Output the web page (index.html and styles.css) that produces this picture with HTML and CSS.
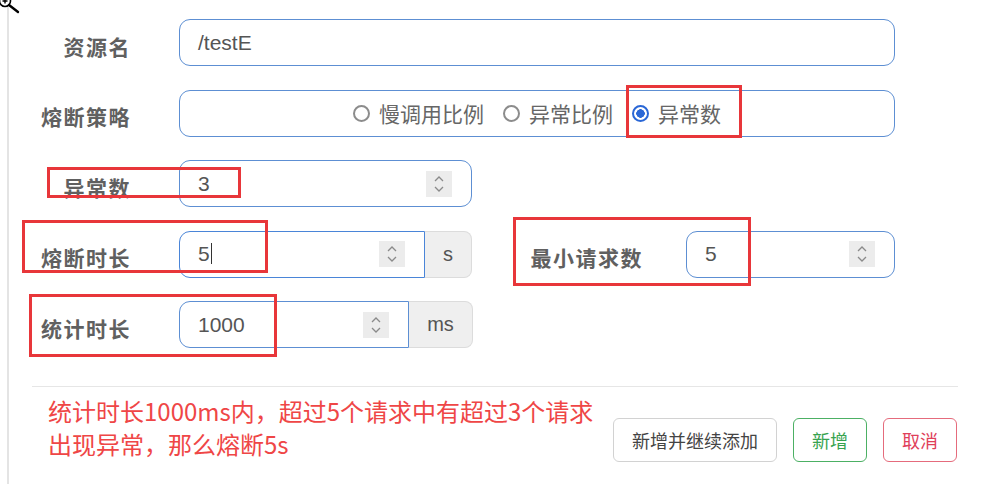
FILE: index.html
```html
<!DOCTYPE html>
<html lang="zh-CN">
<head>
    <meta charset="UTF-8">
    <title>新增降级规则</title>
    <link rel="stylesheet" href="styles.css">
</head>
<body>
    <svg class="cursor" width="24" height="18" viewBox="0 0 24 18">
        <circle cx="7" cy="3" r="5.5" fill="#fff" stroke="#000" stroke-width="1.6"/>
        <path d="M4.5 3h5M7 0.5v5" stroke="#000" stroke-width="1.4"/>
        <path d="M11 7l9 7" stroke="#000" stroke-width="2.4" stroke-linecap="round"/>
    </svg>

    <div class="panel">
        <div class="row">
            <label class="label">资源名</label>
            <div class="field wide"><span class="value">/testE</span></div>
        </div>

        <div class="row">
            <label class="label">熔断策略</label>
            <div class="field wide radios">
                <span class="radio"><i class="dot"></i>慢调用比例</span>
                <span class="radio"><i class="dot"></i>异常比例</span>
                <span class="radio checked"><i class="dot"></i>异常数</span>
            </div>
        </div>

        <div class="row">
            <label class="label">异常数</label>
            <div class="field num count">
                <span class="value">3</span>
                <span class="spin"><svg width="12" height="18" viewBox="0 0 12 18"><path d="M2 6l4-4 4 4M2 12l4 4 4-4" fill="none" stroke="#8a8a8a" stroke-width="1.3"/></svg></span>
            </div>
        </div>

        <div class="row">
            <label class="label">熔断时长</label>
            <div class="group">
                <div class="field num joined focus">
                    <span class="value">5<b class="caret"></b></span>
                    <span class="spin"><svg width="12" height="18" viewBox="0 0 12 18"><path d="M2 6l4-4 4 4M2 12l4 4 4-4" fill="none" stroke="#8a8a8a" stroke-width="1.3"/></svg></span>
                </div>
                <span class="addon">s</span>
            </div>
            <label class="label side">最小请求数</label>
            <div class="field num minreq">
                <span class="value">5</span>
                <span class="spin"><svg width="12" height="18" viewBox="0 0 12 18"><path d="M2 6l4-4 4 4M2 12l4 4 4-4" fill="none" stroke="#8a8a8a" stroke-width="1.3"/></svg></span>
            </div>
        </div>

        <div class="row">
            <label class="label">统计时长</label>
            <div class="group">
                <div class="field num joined stat">
                    <span class="value">1000</span>
                    <span class="spin"><svg width="12" height="18" viewBox="0 0 12 18"><path d="M2 6l4-4 4 4M2 12l4 4 4-4" fill="none" stroke="#8a8a8a" stroke-width="1.3"/></svg></span>
                </div>
                <span class="addon ms">ms</span>
            </div>
        </div>

        <div class="footer">
            <p class="note">统计时长1000ms内，超过5个请求中有超过3个请求<br>出现异常，那么熔断5s</p>
            <div class="buttons">
                <button class="btn">新增并继续添加</button>
                <button class="btn ok">新增</button>
                <button class="btn cancel">取消</button>
            </div>
        </div>
    </div>

    <!-- red annotation boxes drawn over the form -->
    <div class="mark m1"></div>
    <div class="mark m2"></div>
    <div class="mark m3"></div>
    <div class="mark m4"></div>
    <div class="mark m5"></div>
</body>
</html>
```

FILE: styles.css
```css
body {
    margin: 0;
    background: #fff;
    font-family: "Liberation Sans", "Noto Sans CJK SC", sans-serif;
    color: #555;
    position: relative;
    height: 484px;
    overflow: hidden;
}
.cursor {
    position: absolute;
    left: -2px;
    top: -2px;
}
.panel {
    margin-left: 7px;
    border-left: 2px solid #e4e4e4;
    height: 484px;
    padding-top: 19px;
    box-sizing: border-box;
}
.row {
    display: flex;
    align-items: center;
    height: 47px;
    margin-bottom: 23.5px;
}
.label {
    width: 122px;
    margin-right: 48px;
    text-align: right;
    font-family: "Noto Sans CJK SC", sans-serif;
    font-weight: bold;
    font-size: 21px;
    letter-spacing: 1.5px;
    color: #606060;
    padding-top: 6px;
}
.label.side {
    width: 171px;
    margin-right: 43px;
}
.field {
    height: 47px;
    box-sizing: border-box;
    border: 1px solid #5d8fd3;
    border-radius: 11px;
    display: flex;
    align-items: center;
    padding-left: 18px;
    font-size: 21px;
    color: #555;
}
.wide {
    width: 716px;
}
.radios {
    justify-content: center;
    padding-left: 0;
    gap: 19px;
    font-family: "Noto Sans CJK SC", sans-serif;
    font-size: 21px;
    color: #666;
}
.radio {
    display: flex;
    align-items: center;
}
.dot {
    flex-shrink: 0;
    width: 17px;
    height: 17px;
    box-sizing: border-box;
    border: 2px solid #8c8c8c;
    border-radius: 50%;
    margin-right: 9px;
}
.checked .dot {
    border-color: #2a67d6;
    background: radial-gradient(circle, #2a67d6 0 4px, #fff 4.5px);
}
.num {
    justify-content: space-between;
    padding-right: 19px;
}
.spin {
    width: 26px;
    height: 26px;
    background: #ececec;
    display: flex;
    align-items: center;
    justify-content: center;
}
.count {
    width: 293px;
}
.group {
    display: flex;
    height: 47px;
}
.joined {
    border-radius: 11px 0 0 11px;
}
.focus {
    width: 246px;
    border-color: #4a85d8;
}
.stat {
    width: 230px;
    padding-right: 19px;
}
.addon {
    width: 47px;
    box-sizing: border-box;
    border: 1px solid #dcdcdc;
    border-left: none;
    border-radius: 0 8px 8px 0;
    background: #efefef;
    display: flex;
    align-items: center;
    justify-content: center;
    font-size: 20px;
    color: #555;
}
.addon.ms {
    width: 64px;
}
.minreq {
    width: 209px;
}
.caret {
    display: inline-block;
    width: 1px;
    height: 21px;
    background: #333;
    vertical-align: -3px;
    margin-left: 1px;
}
.footer {
    margin: 38px 37px 0 23px;
    border-top: 1px solid #e6e6e6;
    display: flex;
    justify-content: space-between;
    padding: 0 1px 0 16px;
}
.note {
    margin: 7px 0 0;
    font-family: "Noto Sans CJK SC", sans-serif;
    font-size: 24px;
    line-height: 33px;
    color: #ef4646;
}
.buttons {
    display: flex;
    gap: 16px;
    margin-top: 31px;
}
.btn {
    height: 44px;
    padding: 0 18px;
    font-family: "Noto Sans CJK SC", sans-serif;
    font-size: 18px;
    color: #444;
    background: #fff;
    border: 1px solid #d2d2d2;
    border-radius: 6px;
}
.btn.ok {
    color: #37a34f;
    border-color: #4cb064;
}
.btn.cancel {
    color: #e0405a;
    border-color: #e56b7c;
}
.mark {
    position: absolute;
    border: 3px solid #e8363a;
    box-sizing: border-box;
}
.m1 { left: 626px; top: 85px; width: 116px; height: 53px; }
.m2 { left: 47px; top: 167px; width: 194px; height: 31px; }
.m3 { left: 22px; top: 220px; width: 246px; height: 53px; }
.m4 { left: 513px; top: 217px; width: 238px; height: 69px; }
.m5 { left: 29px; top: 294px; width: 248px; height: 63px; }
```
